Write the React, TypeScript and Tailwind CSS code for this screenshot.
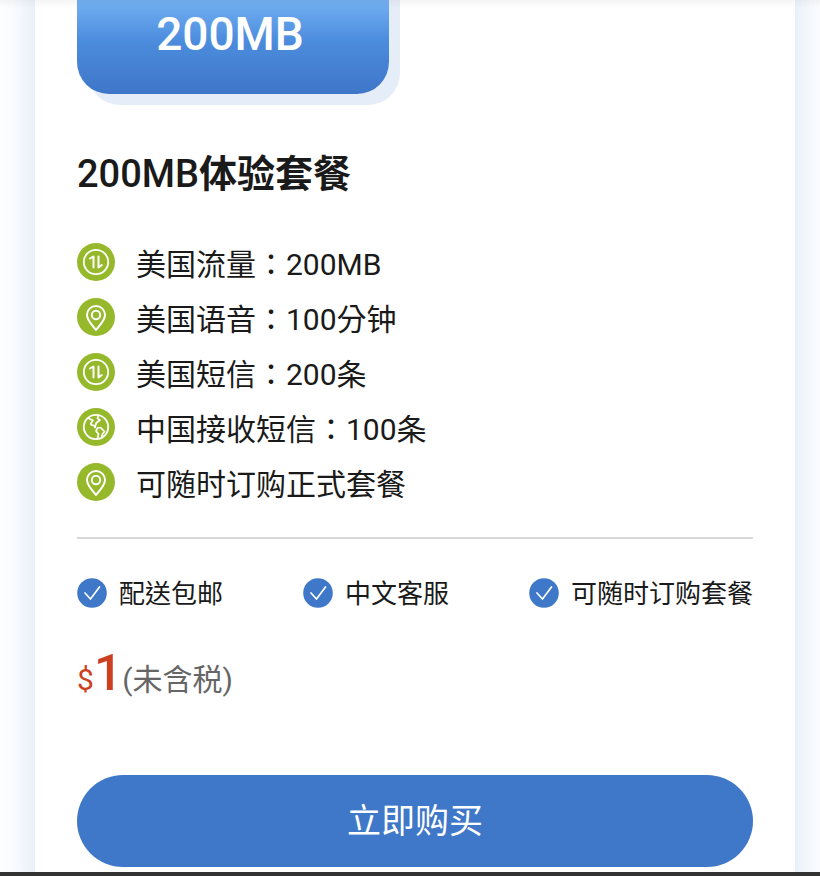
import type { ReactNode } from "react";

type IconKind = "data" | "pin" | "globe";

const details: { icon: IconKind; text: string }[] = [
  { icon: "data", text: "美国流量：200MB" },
  { icon: "pin", text: "美国语音：100分钟" },
  { icon: "data", text: "美国短信：200条" },
  { icon: "globe", text: "中国接收短信：100条" },
  { icon: "pin", text: "可随时订购正式套餐" },
];

const perks = ["配送包邮", "中文客服", "可随时订购套餐"];

const glyphs: Record<IconKind, ReactNode> = {
  data: (
    <>
      <circle cx="19" cy="19" r="12.2" strokeWidth="1.8" />
      <path d="M13 15.500l3.500-2V24.500M21.500 13.500V24.500l3.300-2.500" strokeWidth="2" />
    </>
  ),
  pin: (
    <>
      <path d="M19 32C16 28 10 22.500 10 17a9 9 0 0 1 18 0C28 22.500 22 28 19 32z" strokeWidth="2" />
      <circle cx="19" cy="17" r="4.2" strokeWidth="2" />
    </>
  ),
  globe: (
    <>
      <circle cx="19" cy="19" r="12.2" strokeWidth="1.8" />
      <path
        d="M12 10.500L16 12.500l-2.300 3 .8 1.500 2.500.5 1 2 1.200-4.500 3.800-3-2.500-1.500 1-3.500M20.500 30.500l1-4.500-2.500-3 1.500-3 3-.500 2 2 2 2-2 2.500-1 3.500"
        strokeWidth="1.700"
      />
    </>
  ),
};

function DetailIcon({ kind }: { kind: IconKind }) {
  return (
    <svg viewBox="0 0 38 38" className="size-[38px] shrink-0" aria-hidden="true">
      <circle cx="19" cy="19" r="19" fill="#95b92b" />
      <g fill="none" stroke="#fff" strokeLinecap="round" strokeLinejoin="round">
        {glyphs[kind]}
      </g>
    </svg>
  );
}

function CheckIcon() {
  return (
    <svg viewBox="0 0 30 30" className="size-[30px] shrink-0" aria-hidden="true">
      <circle cx="15" cy="15" r="14.8" fill="#3f78c8" />
      <path d="M8 15l5.500 6L22.500 9" fill="none" stroke="#fff" strokeWidth="1.7" strokeLinecap="round" />
    </svg>
  );
}

export default function App() {
  return (
    <div
      lang="zh-Hant"
      className="relative overflow-hidden border-b-4 border-[#333] bg-white pr-[25px] pl-[35px] font-['Roboto','Noto_Sans_CJK_TC',sans-serif] text-[#1a1a1a]"
    >
      <div className="pointer-events-none absolute inset-x-0 top-0 z-10 h-2 bg-linear-to-b from-black/4 to-transparent" />
      <main className="-mb-10 bg-white px-[42px] pb-[45px] shadow-[0_0_40px_#d4e1f5]">
        <div className="-mt-8 flex h-[126px] w-[312px] items-start justify-center rounded-b-[32px] bg-linear-to-b from-[#74b1f3] from-25% via-[#4c8cdd] via-58% to-[#3f76c8] pt-[38px] pr-[6px] text-[46px] leading-[56px] font-medium text-white shadow-[11px_11px_0_#e5edf9]">
          200MB
        </div>

        <h1 className="mt-[52px] text-[38px] leading-[56px] font-medium">
          200MB<span className="font-bold">体验套餐</span>
        </h1>

        <ul className="mt-8">
          {details.map((item) => (
            <li key={item.text} className="flex h-[55px] items-center gap-[21px] text-[30px] leading-[44px]">
              <DetailIcon kind={item.icon} />
              <span className="pt-[6px]">{item.text}</span>
            </li>
          ))}
        </ul>

        <hr className="mt-7 border-t-2 border-[#d9d9d9]" />

        <ul className="mt-[34px] flex items-center justify-between text-[26px] leading-[38px]">
          {perks.map((perk) => (
            <li key={perk} className="flex items-center gap-3">
              <CheckIcon />
              <span className="pt-[2px]">{perk}</span>
            </li>
          ))}
        </ul>

        <p className="mt-7 flex items-baseline text-[30px] leading-[64px] text-[#666]">
          <span className="text-[#cc3f20]">$</span>
          <span className="text-[50px] font-medium text-[#cc3f20]">1</span>
          <span>(未含税)</span>
        </p>

        <button
          type="button"
          className="mt-[63px] block h-[92px] w-full cursor-pointer rounded-full bg-[#3f78c8] text-[34px] leading-[50px] text-white"
        >
          立即购买
        </button>
      </main>
    </div>
  );
}
